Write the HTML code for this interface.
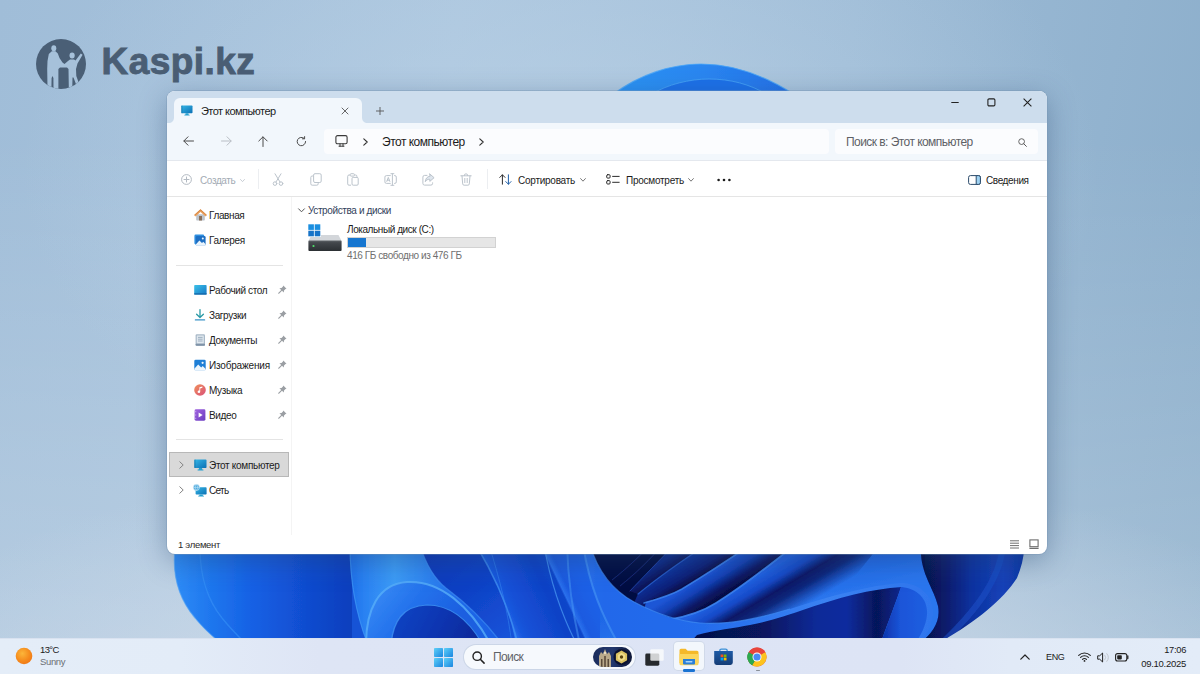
<!DOCTYPE html>
<html lang="ru">
<head>
<meta charset="utf-8">
<title>Этот компьютер</title>
<style>
*{box-sizing:border-box;margin:0;padding:0}
html,body{width:1200px;height:674px;overflow:hidden}
body{font-family:"Liberation Sans",sans-serif;color:#1b1b1b;position:relative;
background:
 radial-gradient(ellipse 760px 250px at 600px 700px,rgba(214,224,236,.9) 0%,rgba(205,218,233,.7) 45%,rgba(200,215,232,0) 100%),
 linear-gradient(180deg,rgba(255,255,255,0) 20%,rgba(255,255,255,.2) 95%),
 radial-gradient(ellipse 540px 340px at 560px 170px,rgba(188,211,231,.75),rgba(188,211,231,0) 100%),
 linear-gradient(100deg,#a0bdd8 0%,#a9c4dd 35%,#9dbbd6 65%,#8aadca 100%);}
.abs{position:absolute}
#wall{position:absolute;left:0;top:0;width:1200px;height:674px}
/* ---------- logo ---------- */
#logo{position:absolute;left:36px;top:38.800px;width:230px;height:52px}
#logotxt{position:absolute;left:101.600px;top:40.100px;font-weight:bold;font-size:37px;line-height:44px;color:#4a5e74;letter-spacing:.45px;-webkit-text-stroke:.9px #4a5e74}
/* ---------- window ---------- */
#win{position:absolute;left:167px;top:91px;width:880px;height:463px;border-radius:8px;background:#fff;overflow:hidden;
 box-shadow:0 0 0 1px rgba(120,150,180,.4),0 7px 28px rgba(40,70,110,.4)}
#title{position:absolute;left:0;top:0;width:880px;height:32px;background:#cfdfee}
#tab{position:absolute;left:7px;top:7px;width:186px;height:26px;background:#f1f6fb;border-radius:7px 7px 0 0}
#tab .t{position:absolute;left:27px;top:5px;font-size:11px;line-height:16px;color:#1a1a1a}
#nav{position:absolute;left:0;top:32px;width:880px;height:38px;background:#f1f6fb;border-bottom:1px solid #e3e8ee}
#addr{position:absolute;left:157px;top:6px;width:506px;height:26px;background:#fbfdff;border-radius:4px}
#srch{position:absolute;left:668px;top:6px;width:203px;height:26px;background:#fbfdff;border-radius:4px}
#cmd{position:absolute;left:0;top:70px;width:880px;height:36px;background:#fff;border-bottom:1px solid #e6e6e6}
#side{position:absolute;left:0;top:106px;width:124px;height:338px;background:#fff;border-right:1px solid #f0f0f0}
#main{position:absolute;left:124px;top:106px;width:756px;height:338px;background:#fff}
#status{position:absolute;left:0;top:444px;width:880px;height:19px;background:#fff}
.si{position:absolute;left:0;width:124px;height:25px;font-size:11px;line-height:25px;color:#1a1a1a}
.si span{position:absolute;left:42px;top:0;white-space:nowrap}
.sep{position:absolute;left:9px;width:107px;height:1px;background:#e2e2e2}
.ct{position:absolute;font-size:11px;line-height:14px;white-space:nowrap;color:#1a1a1a}

#wc{position:absolute;left:-167px;top:-91px;width:1200px;height:674px}
#wc>*{position:absolute}
.tx{white-space:nowrap;color:#1b1b1b}
.ic{overflow:visible}
.t10{font-size:10px;line-height:14px;letter-spacing:-.38px;margin-top:1px}
.gry{color:#9aa3ad}
/* ---------- taskbar ---------- */
#tb{position:absolute;left:0;top:638px;width:1200px;height:36px;background:linear-gradient(90deg,#e4edf8 0,#e3ecf8 180px,#dee5f5 320px,#dde4f5 900px,#e1eaf7 1010px,#e3ecf8 1200px);border-top:1px solid #d9e2f0}
#tb .tx{position:absolute;font-size:11px;line-height:13px;color:#1a1a1a;white-space:nowrap}
</style>
</head>
<body>
<!-- wallpaper bloom -->
<svg id="wall" viewBox="0 0 1200 674">
<!--BLOOM-START-->
<defs>
 <clipPath id="bc"><path d="M175,548 C172,575 178,598 195,618 C203,628 210,634 217,640 L944,640 C975,622 1003,600 1017,578 C1021,568 1024,558 1024,548 Z"/></clipPath>
 <linearGradient id="gL" gradientUnits="userSpaceOnUse" x1="175" y1="0" x2="350" y2="0">
  <stop offset="0" stop-color="#2f8cf6"/><stop offset=".18" stop-color="#2079ef"/><stop offset=".45" stop-color="#1560e4"/><stop offset=".8" stop-color="#1049cc"/><stop offset="1" stop-color="#0d3fbe"/>
 </linearGradient>
 <linearGradient id="gCurl" gradientUnits="userSpaceOnUse" x1="350" y1="0" x2="499" y2="0">
  <stop offset="0" stop-color="#1f70ea"/><stop offset=".1" stop-color="#2a82f2"/><stop offset=".3" stop-color="#3c9cf7"/><stop offset=".5" stop-color="#2f86f2"/><stop offset=".75" stop-color="#1f68e8"/><stop offset="1" stop-color="#1a5ee4"/>
 </linearGradient>
 <linearGradient id="gArc1" gradientUnits="userSpaceOnUse" x1="370" y1="585" x2="440" y2="640">
  <stop offset="0" stop-color="#3a8ef6"/><stop offset=".5" stop-color="#2472ec"/><stop offset="1" stop-color="#1a5fe0"/>
 </linearGradient>
 <linearGradient id="gArc2" gradientUnits="userSpaceOnUse" x1="392" y1="605" x2="470" y2="645">
  <stop offset="0" stop-color="#1246c6"/><stop offset=".6" stop-color="#0c34b0"/><stop offset="1" stop-color="#0a2a9a"/>
 </linearGradient>
 <linearGradient id="gMid" gradientUnits="userSpaceOnUse" x1="212" y1="0" x2="337" y2="0" gradientTransform="matrix(1 0 0.476 1 0 0)">
  <stop offset="0" stop-color="#2a72ee"/><stop offset=".05" stop-color="#1a5be0"/><stop offset=".11" stop-color="#1652d8"/><stop offset=".43" stop-color="#0f42c6"/><stop offset=".545" stop-color="#1146ca"/><stop offset=".56" stop-color="#2a70ec"/><stop offset=".61" stop-color="#1a5ae0"/><stop offset=".75" stop-color="#1d60e6"/><stop offset="1" stop-color="#2068ea"/>
 </linearGradient>
 <linearGradient id="gMain" gradientUnits="userSpaceOnUse" x1="822" y1="602" x2="808" y2="545">
  <stop offset="0" stop-color="#2b76ee"/><stop offset=".5" stop-color="#206ae8"/><stop offset="1" stop-color="#1c60e0"/>
 </linearGradient>
 <linearGradient id="gUnder" gradientUnits="userSpaceOnUse" x1="690" y1="0" x2="902" y2="0">
  <stop offset="0" stop-color="#050f48"/><stop offset=".35" stop-color="#07175e"/><stop offset=".6" stop-color="#0b2a98"/><stop offset=".74" stop-color="#0b2c9e"/><stop offset=".880" stop-color="#06165a"/><stop offset="1" stop-color="#0a2890"/>
 </linearGradient>
 <linearGradient id="gRight" gradientUnits="userSpaceOnUse" x1="920" y1="0" x2="1024" y2="0">
  <stop offset="0" stop-color="#050f45"/><stop offset=".25" stop-color="#081c6c"/><stop offset=".5" stop-color="#0e32a0"/><stop offset=".8" stop-color="#1442b8"/><stop offset="1" stop-color="#0f36a6"/>
 </linearGradient>
 <linearGradient id="gBand" gradientUnits="userSpaceOnUse" x1="583" y1="0" x2="930" y2="0">
  <stop offset="0" stop-color="#2a70ec"/><stop offset=".06" stop-color="#2068ea"/><stop offset=".35" stop-color="#246cec"/><stop offset=".7" stop-color="#3a82f2"/><stop offset="1" stop-color="#2f76ee"/>
 </linearGradient>
 <linearGradient id="gTop" gradientUnits="userSpaceOnUse" x1="616" y1="0" x2="791" y2="0">
  <stop offset="0" stop-color="#2b93f4"/><stop offset=".5" stop-color="#2a86f0"/><stop offset="1" stop-color="#2370e8"/>
 </linearGradient>

 <linearGradient id="gP0" gradientUnits="userSpaceOnUse" x1="655" y1="566" x2="664" y2="580">
  <stop offset="0" stop-color="#0d2a88"/><stop offset="1" stop-color="#060c42"/>
 </linearGradient>
 <linearGradient id="gP1" gradientUnits="userSpaceOnUse" x1="672" y1="568" x2="684" y2="588">
  <stop offset="0" stop-color="#10349e"/><stop offset=".6" stop-color="#0a2078"/><stop offset="1" stop-color="#060c42"/>
 </linearGradient>
 <linearGradient id="gP2" gradientUnits="userSpaceOnUse" x1="709" y1="572" x2="724" y2="596">
  <stop offset="0" stop-color="#1d56d6"/><stop offset=".35" stop-color="#1341b6"/><stop offset=".7" stop-color="#081a68"/><stop offset="1" stop-color="#060c42"/>
 </linearGradient>
 <linearGradient id="gP3" gradientUnits="userSpaceOnUse" x1="747" y1="583" x2="775" y2="630">
  <stop offset="0" stop-color="#2060e0"/><stop offset=".2" stop-color="#164ac8"/><stop offset=".4" stop-color="#081866"/><stop offset=".58" stop-color="#071560" stop-opacity=".8"/><stop offset=".9" stop-color="#0a1c70" stop-opacity="0"/>
 </linearGradient>
 <linearGradient id="gInner" gradientUnits="userSpaceOnUse" x1="880" y1="0" x2="938" y2="0">
  <stop offset="0" stop-color="#0c30a6"/><stop offset=".35" stop-color="#1a55d8"/><stop offset="1" stop-color="#2162e4"/>
 </linearGradient>
 <linearGradient id="gDk" gradientUnits="userSpaceOnUse" x1="430" y1="550" x2="500" y2="640">
  <stop offset="0" stop-color="#0c38b8"/><stop offset=".5" stop-color="#0f42c6"/><stop offset="1" stop-color="#1652d8"/>
 </linearGradient>
 <filter id="bl" x="-5%" y="-5%" width="110%" height="110%"><feGaussianBlur stdDeviation="0.7"/></filter>
 <filter id="bl2" x="-5%" y="-5%" width="110%" height="110%"><feGaussianBlur stdDeviation="2.2"/></filter>
</defs>
<!-- top arch of bloom peeking over the window -->
<g filter="url(#bl)">
 <path d="M612,95 C640,74 672,64 701,64 C734,64 766,76 795,95 Z" fill="url(#gTop)"/>
 <path d="M612,95 C640,74 672,64 701,64 C734,64 766,76 795,95" fill="none" stroke="#4aa6f8" stroke-width="1.2" opacity=".8"/>
 <path d="M650,95 C668,84 690,79 709,79 C730,79 750,84 768,95 Z" fill="#1f70e8"/>
 <path d="M650,95 C668,84 690,79 709,79 C730,79 750,84 768,95" fill="none" stroke="#46a4f6" stroke-width="1" opacity=".8"/>
</g>
<!-- bottom part of bloom -->
<g clip-path="url(#bc)">
 <g filter="url(#bl)">
  <rect x="170" y="545" width="860" height="100" fill="#1552d6"/>
  <!-- left petals -->
  <rect x="170" y="545" width="182" height="100" fill="url(#gL)"/>
  <path d="M200,548 C200,575 206,598 222,618 C230,628 236,634 244,642" fill="none" stroke="#3a96f8" stroke-width="1.3" opacity=".55"/>
  <!-- petal between curl and mid -->
  <path d="M418,545 L480,545 L522,645 L440,645 Z" fill="url(#gDk)"/>
  <!-- curl fold -->
  <path d="M350,545 L420,545 C426,565 436,580 446,588 C462,600 480,615 499,640 L499,645 L368,645 C355,612 350,580 350,545 Z" fill="url(#gCurl)"/>
  <path d="M420,545 C426,565 436,580 446,588 C462,600 480,615 499,640" fill="none" stroke="#3f90f4" stroke-width="1.300" opacity=".6"/>
  <path d="M350,545 C350,580 355,612 368,645" fill="none" stroke="#3f98f6" stroke-width="1.2" opacity=".7"/>
  <!-- arc 1 -->
  <path d="M366,645 C366,610 378,584 407,582 C440,580 470,606 491,645 Z" fill="url(#gArc1)"/>
  <path d="M366,645 C366,610 378,584 407,582 C440,580 470,606 491,645" fill="none" stroke="#58aef9" stroke-width="2" opacity=".8"/>
  <!-- arc 2 -->
  <path d="M391,645 C393,622 402,606 427,605 C452,605 470,622 483,645 Z" fill="url(#gArc2)"/>
  <path d="M391,645 C393,622 402,606 427,605 C452,605 470,622 483,645" fill="none" stroke="#3f93f4" stroke-width="1.2" opacity=".8"/>
  <!-- mid petals -->
  <path d="M476,545 L650,545 L690,645 L516,645 C510,610 494,575 476,545 Z" fill="url(#gMid)"/>
  <path d="M476,545 C494,575 510,610 518,645" fill="none" stroke="#4a9ff6" stroke-width="1.500" opacity=".6"/>
  <path d="M489,545 C500,580 508,612 512,645" fill="none" stroke="#3a8cf2" stroke-width="1" opacity=".5"/>
  <path d="M544,545 C550,580 560,612 577,645" fill="none" stroke="#4a9ff6" stroke-width="1.2" opacity=".7"/>
  <!-- main big petal surface (under everything in this zone) -->
  <path d="M600,545 L921,545 C919,572 934,588 938,606 C941,622 932,634 918,645 L600,645 Z" fill="url(#gMain)"/>
  <!-- dark navy hollow -->
  <path d="M586,545 C596,572 612,590 634,602 C650,610 660,616 668,620 C690,616 705,610 716,603 C745,585 770,565 795,545 Z" fill="#060c42"/>
  <!-- fanning petals inside hollow -->
  <path d="M630,591 C642,578 660,560 674,545 L706,545 C680,562 655,580 638,594 Z" fill="url(#gP0)"/>
  <path d="M638,594 C655,580 680,562 706,545 L750,545 C728,560 705,575 682,589 C675,593 665,596 652,599 L652,614 L634,603 Z" fill="url(#gP1)"/>
  <path d="M646,602 C662,598 675,593 682,589 C705,575 728,560 750,545 L795,545 C770,565 745,585 716,603 C705,610 690,616 668,620 L660,624 L644,610 Z" fill="url(#gP2)"/>
  <path d="M668,620 C690,616 705,610 716,603 C745,585 770,565 795,545 L880,545 L800,645 L690,645 Z" fill="url(#gP3)"/>
  <g fill="none" stroke-linecap="round">
   <path d="M630,591 C642,578 660,560 674,545" stroke="#2a5ccc" stroke-width="1" opacity=".6"/>
   <path d="M638,594 C655,580 680,562 706,545" stroke="#2f6ee0" stroke-width="1.2" opacity=".7"/>
   <path d="M644,603 C662,598 675,593 682,589 C705,575 728,560 750,545" stroke="#3d84f0" stroke-width="1.6" opacity=".85"/>
   <path d="M668,620 C690,616 705,610 716,603 C745,585 770,565 795,545" stroke="#3d84f0" stroke-width="1.8" opacity=".9"/>
  </g>
  <path d="M612,580 C625,570 640,556 650,545 M620,586 C635,574 652,558 662,545" fill="none" stroke="#2a5fd0" stroke-width=".8" opacity=".45"/>
  <!-- underside dark -->
  <path d="M688,645 L697,634 C712,630 740,626 760,622 C780,616 800,608 830,599 C850,593 870,589 902,584 C897,600 888,622 880,645 Z" fill="url(#gUnder)"/>
  <!-- inner curl visible side -->
  <path d="M880,645 C888,622 897,600 902,584 C925,586 940,606 918,645 Z" fill="url(#gInner)"/>
  <!-- ribbon: thick on left, tapering into ridge on right -->
  <path d="M590,545 C598,572 612,590 634,602 C655,613 675,621 700,623 C730,625 760,618 790,609 C830,596 870,585 902,583 C928,584 946,608 920,645 L914,645 C938,612 926,590 902,587 C870,589 840,597 800,611 C780,618 765,622 750,625 C735,628 715,630 697,635 L688,645 L619,645 C602,615 590,588 583,545 Z" fill="url(#gBand)"/>
  <path d="M567,545 C568,580 572,610 580,645" fill="none" stroke="#4a9af6" stroke-width="2" opacity=".5"/>
  <path d="M583,545 C590,588 602,615 619,645" fill="none" stroke="#4a9af6" stroke-width="2" opacity=".55"/>
  <path d="M590,545 C598,572 612,590 634,602 C655,613 675,621 700,623 C730,625 760,618 790,609" fill="none" stroke="#3f8cf4" stroke-width="1.200" opacity=".7"/>
  <!-- right dark petals -->
  <path d="M921,545 L1030,545 L1030,645 L918,645 C932,634 941,622 938,606 C934,588 919,572 921,545 Z" fill="url(#gRight)"/>
  <path d="M1003,545 C1000,580 975,612 940,645" fill="none" stroke="#1d50c8" stroke-width="6" opacity=".55"/>
 </g>
</g>
<!-- soft outer edge highlight -->
<path d="M175,548 C172,575 178,598 195,618 C203,628 210,634 217,640" fill="none" stroke="#56a6f6" stroke-width="1.2" opacity=".6" filter="url(#bl)"/>
<!--BLOOM-END-->
</svg>

<!-- Kaspi logo -->
<svg id="logo" viewBox="0 0 230 52">

<defs><clipPath id="lc"><circle cx="25" cy="25" r="25"/></clipPath></defs>
<circle cx="25" cy="25" r="25" fill="#4a5f76"/>
<g fill="#a6c1da" clip-path="url(#lc)">
 <ellipse cx="17.800" cy="9.300" rx="2.500" ry="3.100"/>
 <ellipse cx="36.100" cy="16.600" rx="2.600" ry="3"/>
 <path d="M15.800 12.300h3.700l2.300 2.200 1.700 4.500 3 4.500 2 1.500 3.500-3 2-1.500h4l1.500 1 5.300-7 1.800 1.300-5.100 8.700-1.500 5.500.3 7 2.700 7.500-2.500 2-3-8h-1l-.2 9.300-3.500.7-.3-18.500-1.500-1.500h-7l-1.600 1.500V50H17.500l-.1-11-.9-2-.9 2-.2 11h-3.900l-.3-20 .3-8 1.300-7z"/>
</g>
</svg>
<div id="logotxt">Kaspi.kz</div>

<!-- Explorer window -->
<div id="win">
<div id="wc">
 <!-- backgrounds -->
 <div style="left:167px;top:91px;width:880px;height:32px;background:#cddded"></div>
 <div style="left:174px;top:98px;width:188px;height:26px;background:#f2f7fc;border-radius:6px 6px 0 0"></div>
 <svg class="ic" style="left:168px;top:117px" width="200" height="6" viewBox="0 0 200 6"><path d="M0 6h6V0C6 4 4 6 0 6zM194 0v6h6c-4 0-6-2-6-6z" fill="#f2f7fc"/></svg>
 <div style="left:167px;top:123px;width:880px;height:37px;background:#f2f7fc"></div>
 <div style="left:167px;top:160px;width:880px;height:1px;background:#e4e8ee"></div>
 <div style="left:324px;top:129px;width:505px;height:25px;background:#fbfcfe;border-radius:4px"></div>
 <div style="left:835px;top:129px;width:203px;height:25px;background:#fbfcfe;border-radius:4px"></div>
 <div style="left:167px;top:196px;width:880px;height:1px;background:#e5e5e5"></div>
 <div style="left:291px;top:197px;width:1px;height:338px;background:#f4f4f4"></div>

 <!-- tab -->
 <svg class="ic" style="left:181px;top:104.500px" width="12" height="11" viewBox="0 0 13 12"><defs><linearGradient id="mon" x1="0" y1="0" x2="1" y2="1"><stop offset="0" stop-color="#35b6e6"/><stop offset="1" stop-color="#0b70b4"/></linearGradient></defs><rect x=".3" y=".6" width="12.2" height="8.4" rx=".8" fill="url(#mon)"/><rect x=".3" y=".6" width="1.2" height="8.4" fill="#0f6a9e" opacity=".55"/><path d="M5 9h3l.4 1.5h1v.9H3.6v-.9h1z" fill="#27a0cf"/></svg>
 <div class="tx" style="left:201px;top:103.500px;font-size:11px;line-height:15px;letter-spacing:-.55px">Этот компьютер</div>
 <svg class="ic" style="left:340.500px;top:106.500px" width="8" height="8" viewBox="0 0 9 9"><path d="M.8.8l7.4 7.4M8.2.8L.8 8.2" stroke="#555" stroke-width="1" fill="none"/></svg>
 <svg class="ic" style="left:375.500px;top:106.500px" width="8" height="8" viewBox="0 0 9 9"><path d="M4.5 0v9M0 4.5h9" stroke="#555" stroke-width="1" fill="none"/></svg>
 <!-- window buttons -->
 <svg class="ic" style="left:951px;top:98px" width="8" height="9" viewBox="0 0 8 9"><path d="M.3 4.500h7.400" stroke="#222" stroke-width="1" fill="none"/></svg>
 <svg class="ic" style="left:987px;top:98px" width="9" height="9" viewBox="0 0 9 9"><rect x=".9" y=".9" width="7" height="7" rx="1.2" stroke="#222" stroke-width="1.1" fill="none"/></svg>
 <svg class="ic" style="left:1023px;top:98px" width="9" height="9" viewBox="0 0 9 9"><path d="M.6.6l7.8 7.8M8.4.6L.6 8.4" stroke="#222" stroke-width="1.1" fill="none"/></svg>


 <!-- nav buttons -->
 <svg class="ic" style="left:183px;top:136px" width="11" height="10" viewBox="0 0 11 10"><path d="M10.5 5H1M5 .8L.8 5 5 9.2" stroke="#4a4a4a" stroke-width="1" fill="none" stroke-linecap="round" stroke-linejoin="round"/></svg>
 <svg class="ic" style="left:221px;top:136px" width="11" height="10" viewBox="0 0 11 10"><path d="M.5 5H10M6 .8L10.2 5 6 9.2" stroke="#b9bec5" stroke-width="1" fill="none" stroke-linecap="round" stroke-linejoin="round"/></svg>
 <svg class="ic" style="left:258px;top:136px" width="10" height="11" viewBox="0 0 10 11"><path d="M5 10.5V1M.8 5L5 .8 9.2 5" stroke="#4a4a4a" stroke-width="1" fill="none" stroke-linecap="round" stroke-linejoin="round"/></svg>
 <svg class="ic" style="left:296px;top:136px" width="11" height="11" viewBox="0 0 11 11"><path d="M9.6 5.5a4.2 4.2 0 1 1-1.4-3.1" stroke="#4a4a4a" stroke-width="1" fill="none" stroke-linecap="round"/><path d="M8.6.6v2.2H6.4" stroke="#4a4a4a" stroke-width="1" fill="none" stroke-linecap="round" stroke-linejoin="round"/></svg>
 <!-- address -->
 <svg class="ic" style="left:335px;top:135px" width="13" height="12" viewBox="0 0 13 12"><rect x=".9" y=".6" width="11.2" height="8.2" rx="1.6" stroke="#3a3a3a" stroke-width="1.1" fill="none"/><path d="M4 11.2h5M5 8.8v2.4M8 8.8v2.4" stroke="#3a3a3a" stroke-width="1" fill="none" stroke-linecap="round"/></svg>
 <svg class="ic" style="left:363px;top:138px" width="5" height="8" viewBox="0 0 5 8"><path d="M.8.8L4.2 4 .8 7.2" stroke="#333" stroke-width="1.1" fill="none" stroke-linecap="round" stroke-linejoin="round"/></svg>
 <div class="tx" style="left:382px;top:133.600px;font-size:12px;line-height:16px;letter-spacing:-.5px">Этот компьютер</div>
 <svg class="ic" style="left:479px;top:138px" width="5" height="8" viewBox="0 0 5 8"><path d="M.8.8L4.2 4 .8 7.2" stroke="#333" stroke-width="1.1" fill="none" stroke-linecap="round" stroke-linejoin="round"/></svg>
 <!-- search -->
 <div class="tx" style="left:846px;top:133.800px;font-size:12px;line-height:16px;letter-spacing:-.55px;color:#5e6166">Поиск в: Этот компьютер</div>
 <svg class="ic" style="left:1017.500px;top:137.500px" width="9" height="9" viewBox="0 0 10 10"><circle cx="4" cy="4" r="3.2" stroke="#555" stroke-width="1" fill="none"/><path d="M6.4 6.4L9.3 9.3" stroke="#555" stroke-width="1.1" stroke-linecap="round"/></svg>


 <!-- command bar -->
 <svg class="ic" style="left:181px;top:174px" width="11" height="11" viewBox="0 0 11 11"><circle cx="5.5" cy="5.5" r="4.9" stroke="#b3bac2" stroke-width="1" fill="none"/><path d="M5.5 3v5M3 5.5h5" stroke="#b3bac2" stroke-width="1" stroke-linecap="round"/></svg>
 <div class="tx t10 gry" style="left:200px;top:173px;color:#a3abb4">Создать</div>
 <svg class="ic" style="left:239.500px;top:178.500px" width="5" height="3.300" viewBox="0 0 6 4"><path d="M.6.6L3 3.2 5.4.6" stroke="#bcc4cc" stroke-width="1" fill="none" stroke-linecap="round" stroke-linejoin="round"/></svg>
 <div style="left:258px;top:169px;width:1px;height:20px;background:#eceef1"></div>
 <!-- cut -->
 <svg class="ic" style="left:272px;top:173px" width="12" height="13" viewBox="0 0 12 13"><g stroke="#bcc4cc" stroke-width="1" fill="none" stroke-linecap="round"><path d="M3 .8l5 8.2M9 .8L4 9"/><circle cx="3" cy="10.6" r="1.8"/><circle cx="9" cy="10.6" r="1.8"/></g></svg>
 <!-- copy -->
 <svg class="ic" style="left:310px;top:173px" width="12" height="13" viewBox="0 0 12 13"><g stroke="#bcc4cc" stroke-width="1" fill="none"><rect x="3.6" y=".7" width="7.6" height="8.8" rx="1.4"/><path d="M3.4 3H2.2A1.4 1.4 0 0 0 .8 4.4v6.4a1.4 1.4 0 0 0 1.4 1.4h4.6a1.4 1.4 0 0 0 1.4-1.4V9.6"/></g></svg>
 <!-- paste -->
 <svg class="ic" style="left:347px;top:173px" width="12" height="13" viewBox="0 0 12 13"><g stroke="#bcc4cc" stroke-width="1" fill="none"><path d="M3.2 2H2A1.3 1.3 0 0 0 .7 3.3v7.6A1.3 1.3 0 0 0 2 12.200h2"/><rect x="3.2" y=".7" width="4.2" height="2.4" rx=".9"/><rect x="5" y="4.400" width="6.2" height="7.8" rx="1.2"/><path d="M7.400 2h1.200a1.300 1.300 0 0 1 1.300 1.300v1"/></g></svg>
 <!-- rename -->
 <svg class="ic" style="left:384px;top:173px" width="13" height="13" viewBox="0 0 13 13"><g stroke="#bcc4cc" stroke-width="1" fill="none" stroke-linecap="round"><path d="M6.300 2.600H2.400A1.500 1.500 0 0 0 .9 4.100v4.800a1.500 1.500 0 0 0 1.500 1.500h3.900M10.400 2.600h.4a1.500 1.500 0 0 1 1.500 1.500v4.800a1.500 1.500 0 0 1-1.500 1.500h-.4"/><path d="M8.400.7v11.600M6.900.7h3M6.900 12.300h3"/><path d="M2.800 8.400l1.500-4 1.500 4M3.300 7.200h2"/></g></svg>
 <!-- share -->
 <svg class="ic" style="left:422px;top:173px" width="13" height="13" viewBox="0 0 13 13"><g stroke="#bcc4cc" stroke-width="1" fill="none" stroke-linejoin="round" stroke-linecap="round"><path d="M5 2.400H2.600A1.700 1.700 0 0 0 .9 4.100v6.300a1.700 1.700 0 0 0 1.700 1.700h6.300a1.700 1.700 0 0 0 1.700-1.700V9.800"/><path d="M7.800 1l4.300 3.700-4.300 3.700V6.300C5.600 6.200 4.200 7 3.300 8.700 3.500 5.700 5 3.600 7.800 3.200z" fill="#dfe6ee"/></g></svg>
 <!-- delete -->
 <svg class="ic" style="left:460px;top:173px" width="12" height="13" viewBox="0 0 12 13"><g stroke="#bcc4cc" stroke-width="1" fill="none" stroke-linecap="round"><path d="M.8 2.800h10.400M4.200 2.600a1.800 1.800 0 0 1 3.600 0M2 2.900l.7 8a1.400 1.400 0 0 0 1.400 1.300h3.800a1.400 1.400 0 0 0 1.400-1.300l.7-8M4.800 5.400v4.200M7.200 5.400v4.200"/></g></svg>
 <div style="left:487px;top:169px;width:1px;height:20px;background:#eceef1"></div>
 <!-- sort -->
 <svg class="ic" style="left:499px;top:174px" width="13" height="11" viewBox="0 0 13 11"><g stroke="#2b2b2b" stroke-width="1" fill="none" stroke-linecap="round" stroke-linejoin="round"><path d="M3.400 10.200V.9M.8 3.400L3.400.8 6 3.400"/><path d="M9.400.8v9.300M6.800 7.600l2.600 2.600L12 7.600" stroke="#1f5fa8"/></g></svg>
 <div class="tx t10" style="left:518px;top:173px;letter-spacing:-.25px">Сортировать</div>
 <svg class="ic" style="left:580px;top:178px" width="6" height="4" viewBox="0 0 6 4"><path d="M.6.6L3 3.200 5.400.6" stroke="#777" stroke-width="1" fill="none" stroke-linecap="round" stroke-linejoin="round"/></svg>
 <!-- view -->
 <svg class="ic" style="left:606px;top:174px" width="14" height="11" viewBox="0 0 14 11"><g stroke="#2b2b2b" stroke-width="1" fill="none" stroke-linecap="round"><rect x=".7" y=".7" width="3.400" height="3.400" rx="1"/><rect x=".7" y="6.600" width="3.400" height="3.400" rx="1"/><path d="M6.600 2.400h6.600M6.600 8.300h6.600"/></g></svg>
 <div class="tx t10" style="left:626px;top:173px;letter-spacing:-.25px">Просмотреть</div>
 <svg class="ic" style="left:688px;top:178px" width="6" height="4" viewBox="0 0 6 4"><path d="M.6.6L3 3.200 5.400.6" stroke="#777" stroke-width="1" fill="none" stroke-linecap="round" stroke-linejoin="round"/></svg>
 <svg class="ic" style="left:717px;top:178px" width="14" height="4" viewBox="0 0 14 4"><circle cx="1.600" cy="2" r="1.300" fill="#1b1b1b"/><circle cx="7" cy="2" r="1.300" fill="#1b1b1b"/><circle cx="12.400" cy="2" r="1.300" fill="#1b1b1b"/></svg>
 <!-- details -->
 <svg class="ic" style="left:968px;top:175px" width="13" height="10" viewBox="0 0 13 10"><rect x=".6" y=".6" width="11.800" height="8.800" rx="1.800" stroke="#2b4a6a" stroke-width="1" fill="none"/><path d="M8.200.6h2.400a1.800 1.800 0 0 1 1.800 1.800v5.200a1.800 1.800 0 0 1-1.800 1.800H8.200z" fill="#9fd2f2" stroke="#2b4a6a" stroke-width="1"/></svg>
 <div class="tx t10" style="left:986px;top:173px">Сведения</div>


 <!-- sidebar --><svg class="ic" style="left:193.500px;top:209px" width="13" height="12" viewBox="0 0 13 12"><path d="M2.200 5.200h8.600v5.600a.7.700 0 0 1-.7.700H2.900a.7.700 0 0 1-.7-.7z" fill="#bcc3cb"/><rect x="5" y="7" width="3" height="4.500" fill="#8a6f58"/><path d="M6.500.3L.2 5.900l1.300 1.500 5-4.400 5 4.400 1.300-1.500z" fill="#e9a160"/><path d="M6.500.3L.2 5.900l.6.700L6.500 1.600l5.700 5 .6-.7z" fill="#d98842"/></svg>
 <div class="tx t10" style="left:209px;top:208px">Главная</div><svg class="ic" style="left:194px;top:234px" width="12" height="12" viewBox="0 0 12 12"><rect x=".4" y=".6" width="9.800" height="9.800" rx="1.300" fill="#2f8fe0"/><rect x="1.800" y="2" width="9.800" height="9.600" rx="1.300" fill="#1d6fc4"/><path d="M1.800 10.400l3.600-4 2.600 2.600 1.300-1.300 2.300 2.500v.2a1.300 1.300 0 0 1-1.300 1.300H3.100a1.300 1.300 0 0 1-1.300-1.300z" fill="#eaf4fc"/><circle cx="8.800" cy="4.600" r="1" fill="#eaf4fc"/></svg>
 <div class="tx t10" style="left:209px;top:233px">Галерея</div>
 <div style="left:176px;top:265px;width:107px;height:1px;background:#e4e4e4"></div><svg class="ic" style="left:194px;top:284px" width="13" height="12" viewBox="0 0 13 12"><defs><linearGradient id="dsk" x1="0" y1="0" x2="1" y2="1"><stop offset="0" stop-color="#3cc1e8"/><stop offset="1" stop-color="#1577c6"/></linearGradient></defs><rect x=".2" y="1" width="12.400" height="9.600" rx=".8" fill="url(#dsk)"/><rect x=".2" y="9.300" width="12.400" height="1.300" fill="#1467a8"/></svg>
 <div class="tx t10" style="left:209px;top:283px">Рабочий стол</div>
 <svg class="ic" style="left:278px;top:285px" width="9" height="9" viewBox="0 0 9 9"><path d="M5.300.5l3.200 3.200-1 .3-1.500 1.500-.2 2.100-1.800-1.800L1 8.800.2 8.800.2 8l3-3L1.400 3.200l2.100-.2L5 1.500z" fill="#9a9ea3"/></svg><svg class="ic" style="left:194px;top:309px" width="12" height="12" viewBox="0 0 12 12"><path d="M6 .6v7.600M2.600 5.200L6 8.500l3.400-3.300" stroke="#2a9aa6" stroke-width="1.300" fill="none" stroke-linecap="round" stroke-linejoin="round"/><path d="M1.400 10.900h9.200" stroke="#3a93c8" stroke-width="1.300" stroke-linecap="round"/></svg>
 <div class="tx t10" style="left:209px;top:308px">Загрузки</div>
 <svg class="ic" style="left:278px;top:310px" width="9" height="9" viewBox="0 0 9 9"><path d="M5.300.5l3.200 3.200-1 .3-1.500 1.500-.2 2.100-1.800-1.800L1 8.800.2 8.800.2 8l3-3L1.400 3.200l2.100-.2L5 1.500z" fill="#9a9ea3"/></svg><svg class="ic" style="left:195px;top:334px" width="11" height="12" viewBox="0 0 11 12"><rect x=".6" y=".3" width="9.400" height="11.400" rx="1.200" fill="#a9b9c8"/><rect x="1.800" y="1.500" width="7" height="8" rx=".5" fill="#dfe7ee"/><path d="M3 3.400h4.600M3 5.200h4.600M3 7h4.600" stroke="#8fa3b6" stroke-width=".8"/><rect x=".6" y="9.800" width="9.400" height="1.900" rx=".8" fill="#7f93a8"/></svg>
 <div class="tx t10" style="left:209px;top:333px">Документы</div>
 <svg class="ic" style="left:278px;top:335px" width="9" height="9" viewBox="0 0 9 9"><path d="M5.300.5l3.200 3.200-1 .3-1.500 1.500-.2 2.100-1.800-1.800L1 8.800.2 8.800.2 8l3-3L1.400 3.200l2.100-.2L5 1.500z" fill="#9a9ea3"/></svg><svg class="ic" style="left:194px;top:359px" width="12" height="12" viewBox="0 0 12 12"><rect x=".3" y=".8" width="11.400" height="10.400" rx="1.300" fill="#1f7fd6"/><path d="M.3 9.800l3.900-4.200 3 3 1.500-1.500 3 3v.1a1.300 1.300 0 0 1-1.300 1.300H1.600A1.300 1.300 0 0 1 .3 10.200z" fill="#eef6fc"/><circle cx="8.600" cy="3.800" r="1.100" fill="#eef6fc"/></svg>
 <div class="tx t10" style="left:209px;top:358px;letter-spacing:-.18px">Изображения</div>
 <svg class="ic" style="left:278px;top:360px" width="9" height="9" viewBox="0 0 9 9"><path d="M5.300.5l3.200 3.200-1 .3-1.500 1.500-.2 2.100-1.800-1.800L1 8.800.2 8.800.2 8l3-3L1.400 3.200l2.100-.2L5 1.500z" fill="#9a9ea3"/></svg><svg class="ic" style="left:194px;top:384px" width="12" height="12" viewBox="0 0 12 12"><defs><linearGradient id="mus" x1="0" y1="0" x2="1" y2="1"><stop offset="0" stop-color="#f0905a"/><stop offset="1" stop-color="#d9507a"/></linearGradient></defs><circle cx="6" cy="6" r="5.800" fill="url(#mus)"/><path d="M5.400 3.200l3-.8v1.400l-2.200.6v3.400a1.300 1.300 0 1 1-.8-1.200z" fill="#fff"/></svg>
 <div class="tx t10" style="left:209px;top:383px">Музыка</div>
 <svg class="ic" style="left:278px;top:385px" width="9" height="9" viewBox="0 0 9 9"><path d="M5.300.5l3.200 3.200-1 .3-1.500 1.500-.2 2.100-1.800-1.800L1 8.800.2 8.800.2 8l3-3L1.400 3.200l2.100-.2L5 1.500z" fill="#9a9ea3"/></svg><svg class="ic" style="left:194px;top:409px" width="12" height="12" viewBox="0 0 12 12"><defs><linearGradient id="vid" x1="0" y1="0" x2="1" y2="1"><stop offset="0" stop-color="#a264e0"/><stop offset="1" stop-color="#6a3cc0"/></linearGradient></defs><rect x=".6" y=".3" width="10.800" height="11.400" rx="1.400" fill="url(#vid)"/><path d="M4.600 3.600v4.800L8.600 6z" fill="#fff"/><path d="M1.700 2.200v1M1.700 5.500v1M1.700 8.800v1" stroke="#d9c2f4" stroke-width=".9"/></svg>
 <div class="tx t10" style="left:209px;top:408px">Видео</div>
 <svg class="ic" style="left:278px;top:410px" width="9" height="9" viewBox="0 0 9 9"><path d="M5.300.5l3.200 3.200-1 .3-1.500 1.500-.2 2.100-1.800-1.800L1 8.800.2 8.800.2 8l3-3L1.400 3.200l2.100-.2L5 1.500z" fill="#9a9ea3"/></svg>
 <div style="left:176px;top:439px;width:107px;height:1px;background:#e4e4e4"></div>
 <div style="left:169px;top:452px;width:120px;height:25px;background:#d9d9d9;border:1px solid #b8b8b8"></div><svg class="ic" style="left:194px;top:459px" width="13" height="12" viewBox="0 0 13 12"><rect x=".3" y=".6" width="12.200" height="8.400" rx=".8" fill="url(#mon)"/><rect x=".3" y=".6" width="1.200" height="8.400" fill="#0f6a9e" opacity=".55"/><path d="M5 9h3l.4 1.500h1v.9H3.600v-.9h1z" fill="#27a0cf"/></svg>
 <div class="tx t10" style="left:209px;top:458px;letter-spacing:-.3px">Этот компьютер</div>
 <svg class="ic" style="left:179px;top:461px" width="5" height="8" viewBox="0 0 5 8"><path d="M.8.800L4.200 4 .8 7.200" stroke="#858585" stroke-width="1" fill="none" stroke-linecap="round" stroke-linejoin="round"/></svg><svg class="ic" style="left:193px;top:484px" width="14" height="13" viewBox="0 0 14 13"><rect x="2.600" y="3.200" width="11" height="7.400" rx=".8" fill="url(#mon)"/><path d="M6.600 10.600h3l.4 1.200h1v.8H5.200v-.8h1z" fill="#27a0cf"/><circle cx="3.400" cy="3.400" r="3.100" fill="#4aa8dc" stroke="#e9f4fb" stroke-width=".6"/><path d="M.6 3.400h5.600M3.400.5c-1.600 1.800-1.600 4 0 5.800M3.400.5c1.600 1.800 1.600 4 0 5.800" stroke="#d9eefa" stroke-width=".5" fill="none"/></svg>
 <div class="tx t10" style="left:209px;top:483px;letter-spacing:-.7px">Сеть</div>
 <svg class="ic" style="left:179px;top:486px" width="5" height="8" viewBox="0 0 5 8"><path d="M.8.800L4.200 4 .8 7.200" stroke="#858585" stroke-width="1" fill="none" stroke-linecap="round" stroke-linejoin="round"/></svg>

 <!-- main pane -->
 <svg class="ic" style="left:298px;top:208px" width="7" height="5" viewBox="0 0 7 5"><path d="M.6.800L3.500 3.800 6.400.8" stroke="#555" stroke-width="1" fill="none" stroke-linecap="round" stroke-linejoin="round"/></svg>
 <div class="tx t10" style="left:308px;top:203px;color:#33425c;letter-spacing:-.38px">Устройства и диски</div>
 <svg class="ic" style="left:308px;top:224px" width="34" height="28" viewBox="0 0 34 28"><defs><linearGradient id="hdd" x1="0" y1="0" x2="0" y2="1"><stop offset="0" stop-color="#5d6267"/><stop offset=".2" stop-color="#43474c"/><stop offset="1" stop-color="#2b2f33"/></linearGradient></defs><path d="M3.500 11h27l3.100 6H.4z" fill="#d3d6da"/><rect x=".4" y="16.600" width="33.200" height="10.400" rx="1" fill="url(#hdd)"/><circle cx="5.500" cy="22" r="1.100" fill="#4fe06a"/><rect x="-.4" y="-.4" width="13.400" height="13.400" fill="#fff"/><rect x=".3" y=".3" width="5.600" height="5.600" fill="#1b8fe0"/><rect x="6.700" y=".3" width="5.600" height="5.600" fill="#1b8fe0"/><rect x=".3" y="6.700" width="5.600" height="5.600" fill="#1673c8"/><rect x="6.700" y="6.700" width="5.600" height="5.600" fill="#1673c8"/></svg>
 <div class="tx t10" style="left:347px;top:222px;letter-spacing:-.42px">Локальный диск (C:)</div>
 <div style="left:347px;top:236.500px;width:149px;height:11px;background:#e6e6e6;border:1px solid #d2d2d2"></div>
 <div style="left:348px;top:237.500px;width:17.500px;height:9px;background:#1676d0"></div>
 <div class="tx t10" style="left:347px;top:248px;color:#6f6f6f;letter-spacing:-.42px">416 ГБ свободно из 476 ГБ</div>


 <!-- status bar -->
 <div class="tx" style="left:178px;top:538px;font-size:9.500px;line-height:13px;letter-spacing:-.3px;color:#2b2b2b">1 элемент</div>
 <svg class="ic" style="left:1010px;top:540px" width="9" height="9" viewBox="0 0 9 9"><path d="M0 .8h9M0 3.200h9M0 5.600h9M0 8h9" stroke="#6e6e6e" stroke-width="1"/></svg>
 <svg class="ic" style="left:1029px;top:539px" width="10" height="10" viewBox="0 0 10 10"><rect x=".9" y=".9" width="8.200" height="6.800" stroke="#6e6e6e" stroke-width="1.100" fill="none"/><path d="M.4 9.300h9.200" stroke="#6e6e6e" stroke-width="1.200"/></svg>

</div>
</div>

<!-- Taskbar -->
<div id="tb">
 
 <!-- weather -->
 <svg class="abs" style="left:15px;top:8px" width="18" height="18" viewBox="0 0 18 18"><defs><radialGradient id="sun" cx=".4" cy=".35" r=".75"><stop offset="0" stop-color="#fbb63a"/><stop offset=".6" stop-color="#f58a1c"/><stop offset="1" stop-color="#ee7414"/></radialGradient></defs><circle cx="9" cy="9" r="8.300" fill="url(#sun)"/></svg>
 <div class="tx" style="left:40px;top:4px;font-size:9.500px;letter-spacing:-.6px">13°C</div>
 <div class="tx" style="left:40px;top:16px;font-size:9.500px;letter-spacing:-.35px;color:#6b6f75">Sunny</div>
 <!-- start -->
 <svg class="abs" style="left:434px;top:9px" width="19" height="19" viewBox="0 0 19 19"><defs><linearGradient id="wl" x1="0" y1="0" x2="1" y2="1"><stop offset="0" stop-color="#5fd0f8"/><stop offset="1" stop-color="#1a86e0"/></linearGradient></defs><rect x="0" y="0" width="9" height="9" rx=".8" fill="url(#wl)"/><rect x="10" y="0" width="9" height="9" rx=".8" fill="url(#wl)"/><rect x="0" y="10" width="9" height="9" rx=".8" fill="url(#wl)"/><rect x="10" y="10" width="9" height="9" rx=".8" fill="url(#wl)"/></svg>
 <!-- search pill -->
 <div class="abs" style="left:464px;top:6px;width:171px;height:24px;border-radius:12px;background:#f6f9fd;box-shadow:0 0 0 1px rgba(170,185,205,.35)"></div>
 <svg class="abs" style="left:472px;top:12px" width="13" height="13" viewBox="0 0 13 13"><circle cx="5.200" cy="5.200" r="4.200" stroke="#222" stroke-width="1.400" fill="none"/><path d="M8.300 8.300l3.800 3.800" stroke="#222" stroke-width="1.500" stroke-linecap="round"/></svg>
 <div class="tx" style="left:493px;top:11px;font-size:12px;line-height:14px;letter-spacing:-.6px;color:#5f6368">Поиск</div>
 <svg class="abs" style="left:593px;top:8px" width="39" height="20" viewBox="0 0 39 20"><defs><clipPath id="sp"><rect x="0" y="0" width="39" height="20" rx="10"/></clipPath><linearGradient id="spb" x1="0" y1="0" x2="1" y2="0"><stop offset="0" stop-color="#1b2c5c"/><stop offset=".5" stop-color="#22386e"/><stop offset="1" stop-color="#0d1638"/></linearGradient></defs><g clip-path="url(#sp)"><rect width="39" height="20" fill="url(#spb)"/><path d="M6 20V9l2-4 2 2 2-5 2 5 2-2 2 4v11z" fill="#b9a98a"/><path d="M8 20v-8h1.500v8zM11.200 20V9h1.600v11zM14.500 20v-8H16v8z" fill="#5a4a3a"/><circle cx="12" cy="6" r="1.300" fill="#e8dcc0"/><circle cx="28.500" cy="10" r="8" fill="#0b1230"/><path d="M28.500 3.500l5.600 3.200v6.600l-5.600 3.200-5.600-3.200V6.700z" fill="#d9c060"/><path d="M28.500 5.800l3.600 2.100v4.200l-3.600 2.100-3.600-2.100V7.900z" fill="#f0dc88"/><circle cx="28.500" cy="10" r="1.700" fill="#5a4410"/></g></svg>
 <!-- task view -->
 <svg class="abs" style="left:644.500px;top:10px" width="19" height="17" viewBox="0 0 19 17"><rect x=".3" y="4.500" width="14" height="12.200" rx="1.400" fill="#26292d"/><rect x="5.300" y=".2" width="13.400" height="11.600" rx="1.200" fill="#fbfcfd" opacity=".8"/></svg>
 <!-- explorer (active) -->
 <div class="abs" style="left:674px;top:3px;width:30px;height:28px;border-radius:4px;background:#f3f7fc;box-shadow:0 0 0 1px rgba(200,210,225,.6)"></div>
 <svg class="abs" style="left:679px;top:9px" width="20" height="18" viewBox="0 0 20 18"><path d="M.5 2.200A1.500 1.500 0 0 1 2 .7h4.600l2 2H18a1.500 1.500 0 0 1 1.500 1.500V15H.5z" fill="#f5b92a"/><path d="M.5 6h19v9.800a1.500 1.500 0 0 1-1.500 1.500H2a1.500 1.500 0 0 1-1.500-1.500z" fill="#fcd65c"/><path d="M4 11h12v4.500a1 1 0 0 1-1 1H5a1 1 0 0 1-1-1z" fill="#2a7fd8"/><rect x="6.500" y="13" width="7" height="1.400" rx=".7" fill="#a8d4f8"/></svg>
 <div class="abs" style="left:683px;top:30.300px;width:12px;height:2.500px;border-radius:1.300px;background:#1a73d2"></div>
 <!-- store -->
 <svg class="abs" style="left:714px;top:9px" width="19" height="19" viewBox="0 0 19 19"><defs><linearGradient id="st" x1="0" y1="0" x2="0" y2="1"><stop offset="0" stop-color="#1d5aa6"/><stop offset="1" stop-color="#143c76"/></linearGradient></defs><path d="M5.800 3.600V2.700a1.600 1.600 0 0 1 1.600-1.600h4.200a1.600 1.600 0 0 1 1.600 1.600v.9" stroke="#3a8fd6" stroke-width="1.300" fill="none"/><path d="M.2 3h18.600v11.500a2.400 2.400 0 0 1-2.400 2.400H2.600a2.400 2.400 0 0 1-2.400-2.400z" fill="url(#st)"/><rect x="6.600" y="6.500" width="2.700" height="2.700" fill="#f25022"/><rect x="9.800" y="6.500" width="2.700" height="2.700" fill="#7fba00"/><rect x="6.600" y="9.700" width="2.700" height="2.700" fill="#00a4ef"/><rect x="9.800" y="9.700" width="2.700" height="2.700" fill="#ffb900"/></svg>
 <!-- chrome -->
 <svg class="abs" style="left:747px;top:8px" width="20" height="20" viewBox="0 0 20 20"><circle cx="10" cy="10" r="9.600" fill="#e8453c"/><path d="M10 10L1.700 5.200A9.600 9.600 0 0 0 5.200 18.300L10 10z" fill="#2da94f"/><path d="M10 10l-4.800 8.300A9.600 9.600 0 0 0 18.300 5.200H10z" fill="#fcc31e"/><path d="M10 10l8.300-4.800A9.600 9.600 0 0 0 1.700 5.200z" fill="#e8453c"/><path d="M10 10l-4.800 8.300A9.600 9.600 0 0 1 1.700 5.200z" fill="#2da94f"/><circle cx="10" cy="10" r="4.500" fill="#fff"/><circle cx="10" cy="10" r="3.600" fill="#4a8af4"/></svg>
 <div class="abs" style="left:755.500px;top:30.800px;width:4.500px;height:1.600px;border-radius:1px;background:#8a9099"></div>
 <!-- tray -->
 <svg class="abs" style="left:1020px;top:15px" width="10" height="6" viewBox="0 0 10 6"><path d="M.8 5.200L5 1l4.200 4.200" stroke="#222" stroke-width="1.200" fill="none" stroke-linecap="round" stroke-linejoin="round"/></svg>
 <div class="tx" style="left:1046px;top:11.500px;font-size:9px;letter-spacing:-.35px">ENG</div>
 <svg class="abs" style="left:1078px;top:13px" width="13" height="10" viewBox="0 0 13 10"><g stroke="#222" stroke-width="1.100" fill="none" stroke-linecap="round"><path d="M.7 3.400a8.200 8.200 0 0 1 11.600 0"/><path d="M2.600 5.400a5.500 5.500 0 0 1 7.800 0"/><path d="M4.500 7.300a2.800 2.800 0 0 1 4 0"/></g><circle cx="6.500" cy="8.900" r=".9" fill="#222"/></svg>
 <svg class="abs" style="left:1097px;top:13px" width="13" height="11" viewBox="0 0 13 11"><path d="M.7 3.800h2L5.600 1v9L2.700 7.200h-2z" stroke="#222" stroke-width="1" fill="none" stroke-linejoin="round"/><path d="M7.800 3.200a3.600 3.600 0 0 1 0 4.600M9.800 1.600a6 6 0 0 1 0 7.800" stroke="#c2c6cc" stroke-width="1" fill="none" stroke-linecap="round"/></svg>
 <svg class="abs" style="left:1115px;top:14px" width="14" height="9" viewBox="0 0 14 9"><rect x=".6" y=".6" width="11.200" height="7.400" rx="2" stroke="#222" stroke-width="1.100" fill="none"/><rect x="2.200" y="2.200" width="4.600" height="4.200" rx=".8" fill="#222"/><path d="M12.800 3v2.600" stroke="#222" stroke-width="1.300" stroke-linecap="round"/></svg>
 <div class="tx" style="left:1140px;top:5px;width:46px;text-align:right;font-size:9.300px;letter-spacing:-.3px">17:06</div>
 <div class="tx" style="left:1136px;top:17.500px;width:50px;text-align:right;font-size:9.500px;letter-spacing:-.28px">09.10.2025</div>

</div>
</body>
</html>
